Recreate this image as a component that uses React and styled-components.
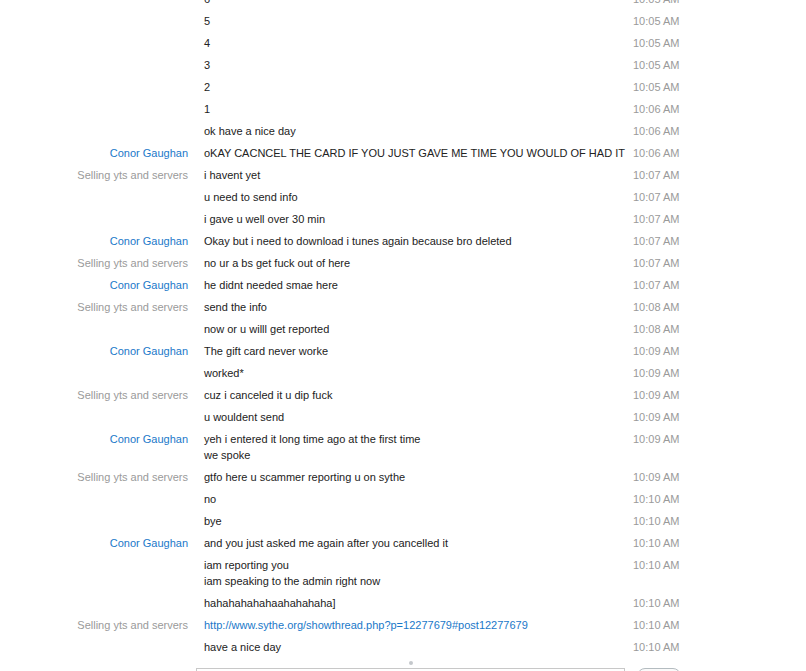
import styled, { createGlobalStyle } from "styled-components";

const GlobalStyle = createGlobalStyle`
  html, body {
    margin: 0;
    padding: 0;
    background: #fff;
    overflow: hidden;
  }
  body {
    font-family: "Liberation Sans", Arial, sans-serif;
    font-size: 11px;
  }
`;

const Window = styled.div`
  width: 806px;
  height: 671px;
  overflow: hidden;
  display: flex;
  flex-direction: column;
  background: #fff;
`;

const History = styled.div`
  margin-top: -12px;
  display: flex;
  flex-direction: column;
`;

const Row = styled.div`
  display: grid;
  grid-template-columns: 188px 413px 1fr;
  column-gap: 16px;
  padding: 3px 0;
  line-height: 16px;
`;

const Author = styled.div`
  text-align: right;
  white-space: nowrap;
  color: ${(p) => (p.$me ? "#1a78c9" : "#9a9a9a")};
`;

const Body = styled.div`
  color: #222;
  white-space: nowrap;
`;

const Link = styled.a`
  color: #1a78c9;
  text-decoration: none;
`;

const Time = styled.div`
  color: #9a9a9a;
  white-space: nowrap;
`;

const Composer = styled.div`
  display: flex;
  flex-direction: column;
  padding-top: 2px;
`;

const Grip = styled.div`
  width: 429px;
  margin-left: 196px;
  display: flex;
  justify-content: center;
  height: 8px;
  &::after {
    content: "";
    width: 4px;
    height: 4px;
    border-radius: 50%;
    background: #c4c8cc;
    margin-top: 1px;
  }
`;

const InputRow = styled.div`
  display: flex;
  align-items: flex-start;
  padding-left: 196px;
  gap: 12px;
`;

const Input = styled.div`
  width: 427px;
  height: 20px;
  border: 1px solid #c8c8c8;
  background: #fff;
`;

const SendButton = styled.div`
  width: 42px;
  height: 20px;
  border: 1px solid #b4bcc0;
  border-radius: 8px;
  background: #fafafa;
`;

const ME = "Conor Gaughan";
const THEM = "Selling yts and servers";

const messages = [
  { text: "6", time: "10:05 AM" },
  { text: "5", time: "10:05 AM" },
  { text: "4", time: "10:05 AM" },
  { text: "3", time: "10:05 AM" },
  { text: "2", time: "10:05 AM" },
  { text: "1", time: "10:06 AM" },
  { text: "ok have a nice day", time: "10:06 AM" },
  { who: ME, text: "oKAY CACNCEL THE CARD IF YOU JUST GAVE ME TIME YOU WOULD OF HAD IT", time: "10:06 AM" },
  { who: THEM, text: "i havent yet", time: "10:07 AM" },
  { text: "u need to send info", time: "10:07 AM" },
  { text: "i gave u well over 30 min", time: "10:07 AM" },
  { who: ME, text: "Okay but i need to download i tunes again because bro deleted", time: "10:07 AM" },
  { who: THEM, text: "no ur a bs get fuck out of here", time: "10:07 AM" },
  { who: ME, text: "he didnt needed smae here", time: "10:07 AM" },
  { who: THEM, text: "send the info", time: "10:08 AM" },
  { text: "now or u willl get reported", time: "10:08 AM" },
  { who: ME, text: "The gift card never worke", time: "10:09 AM" },
  { text: "worked*", time: "10:09 AM" },
  { who: THEM, text: "cuz i canceled it u dip fuck", time: "10:09 AM" },
  { text: "u wouldent send", time: "10:09 AM" },
  { who: ME, lines: ["yeh i entered it long time ago at the first time", "we spoke"], time: "10:09 AM" },
  { who: THEM, text: "gtfo here u scammer reporting u on sythe", time: "10:09 AM" },
  { text: "no", time: "10:10 AM" },
  { text: "bye", time: "10:10 AM" },
  { who: ME, text: "and you just asked me again after you cancelled it", time: "10:10 AM" },
  { lines: ["iam reporting you", "iam speaking to the admin right now"], time: "10:10 AM" },
  { text: "hahahahahahaahahahaha]", time: "10:10 AM" },
  { who: THEM, link: "http://www.sythe.org/showthread.php?p=12277679#post12277679", time: "10:10 AM" },
  { text: "have a nice day", time: "10:10 AM" },
];

function Message({ m }) {
  let content = m.text;
  if (m.link) content = <Link href="#">{m.link}</Link>;
  if (m.lines) content = m.lines.map((l, i) => <div key={i}>{l}</div>);
  return (
    <Row>
      <Author $me={m.who === ME}>{m.who || ""}</Author>
      <Body>{content}</Body>
      <Time>{m.time}</Time>
    </Row>
  );
}

export default function App() {
  return (
    <>
      <GlobalStyle />
      <Window>
        <History>
          {messages.map((m, i) => (
            <Message key={i} m={m} />
          ))}
        </History>
        <Composer>
          <Grip />
          <InputRow>
            <Input />
            <SendButton />
          </InputRow>
        </Composer>
      </Window>
    </>
  );
}
